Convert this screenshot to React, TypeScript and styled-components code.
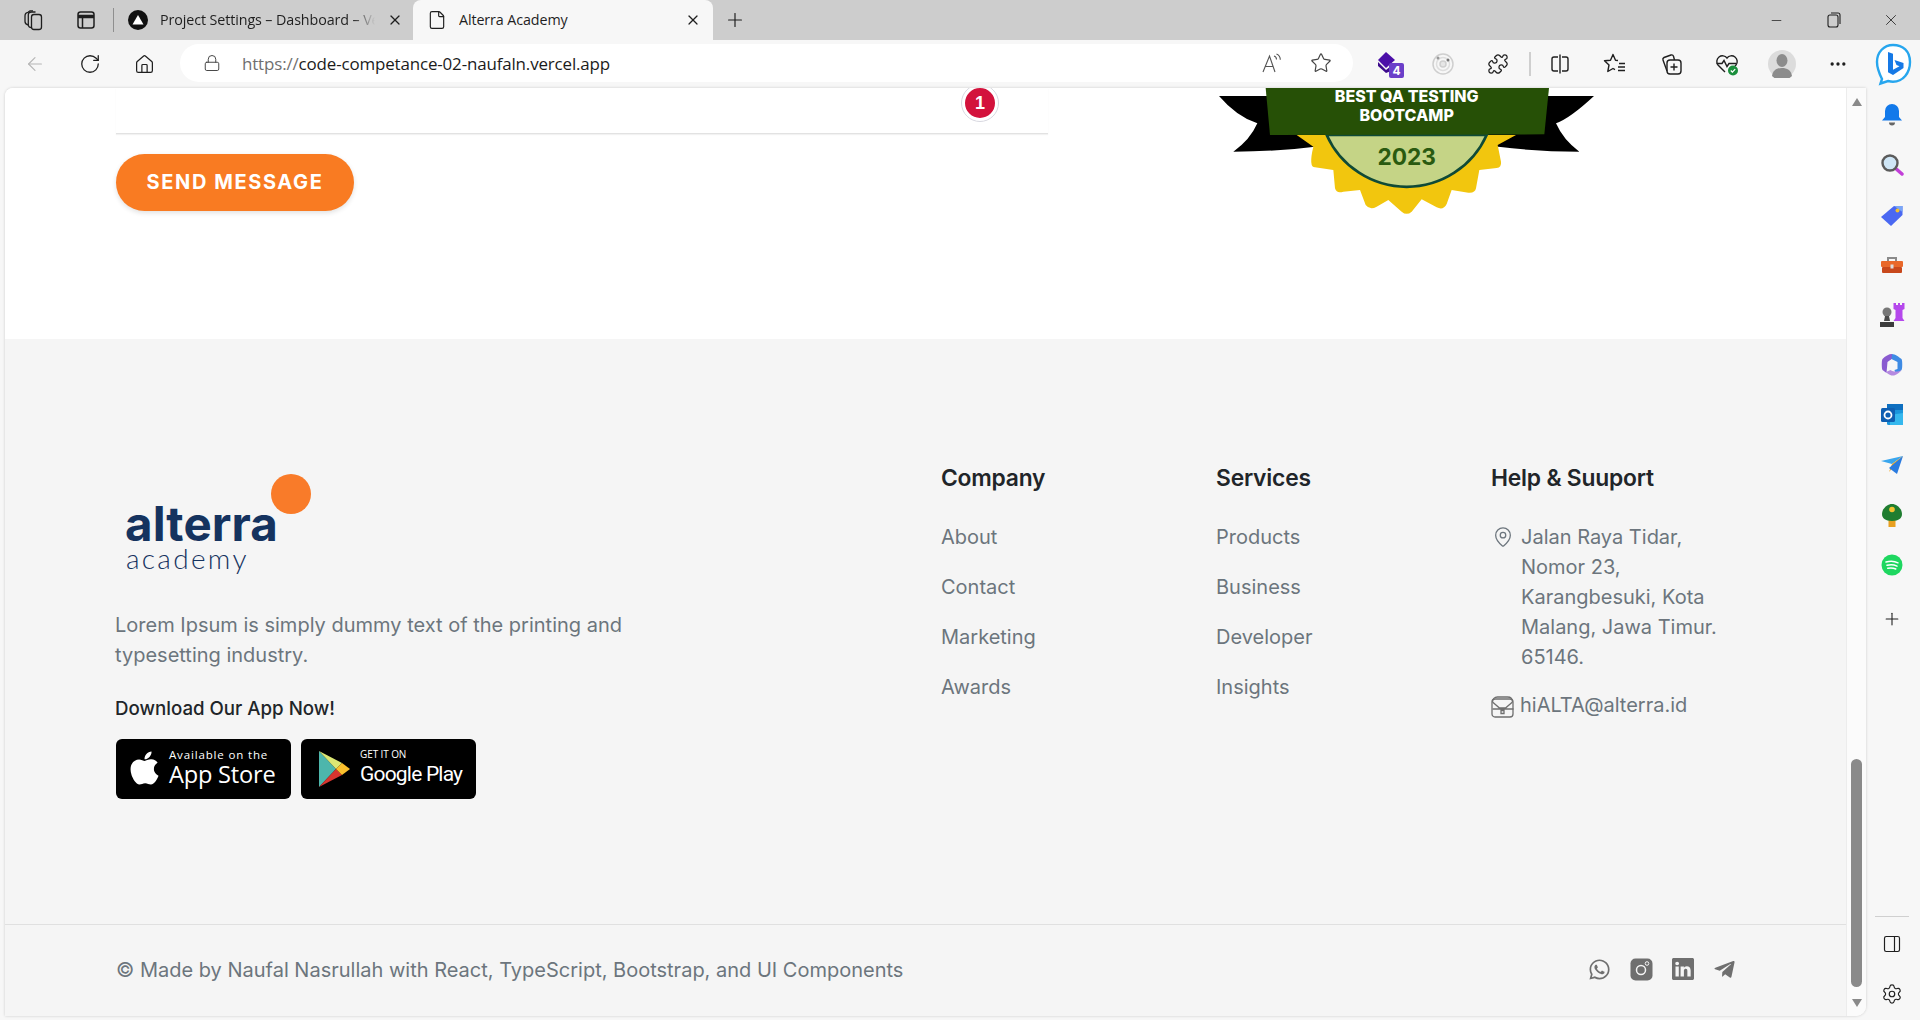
import React from "react";
import styled, { createGlobalStyle } from "styled-components";
import { FaApple, FaWhatsapp, FaTelegramPlane } from "react-icons/fa";
import { BsLinkedin } from "react-icons/bs";
import { RotateCw, Home, Lock, Star, Puzzle, ArrowLeft, X, Plus, Minus, File, MapPin, Settings, PanelRight, MoreHorizontal } from "lucide-react";

const Global = createGlobalStyle`
  html, body { margin: 0; padding: 0; background: #f7f7f7; }
  * { box-sizing: border-box; }
  #root { width: 1920px; height: 1020px; overflow: hidden; }
`;
const ink = "#1f1f1f";
const Root = styled.div`
  width: 1920px; height: 1020px; display: flex; flex-direction: column; background: #f7f7f7;
  font-family: Inter, "Liberation Sans", sans-serif; overflow: hidden;
`;
const TabStrip = styled.div`
  height: 40px; background: #cdcdcd; display: flex; align-items: stretch; padding-left: 6px; flex: none;
`;
const StripSlot = styled.div`
  width: 53px; display: flex; align-items: center; justify-content: center; color: ${ink};
`;
const StripSep = styled.div`
  width: 1px; height: 24px; background: #8f8f8f; align-self: center; margin: 0 2px 0 1px;
`;
const Tab = styled.div<{ $active?: boolean }>`
  width: ${(p) => (p.$active ? 300 : 296)}px; margin-left: ${(p) => (p.$active ? 1 : 0)}px;
  display: flex; align-items: center; gap: 12px; padding: 0 ${(p) => (p.$active ? 12 : 9)}px 0 ${(p) => (p.$active ? 14 : 12)}px;
  background: ${(p) => (p.$active ? "#f7f7f7" : "transparent")};
  border-radius: 8px 8px 0 0; color: ${ink};
`;
const TabTitle = styled.div<{ $fade?: boolean }>`
  flex: 1; overflow: hidden; white-space: nowrap; font: 400 14.3px/20px "Open Sans", sans-serif; letter-spacing: -0.1px; margin-top: -1px;
  ${(p) => p.$fade && "-webkit-mask-image: linear-gradient(90deg, #000 90%, transparent 100%); mask-image: linear-gradient(90deg, #000 90%, transparent 100%);"}
`;
const NewTab = styled.div`
  width: 44px; display: flex; align-items: center; justify-content: center; color: ${ink};
`;
const WindowControls = styled.div`
  margin-left: auto; display: flex; margin-right: 1px;
`;
const WinBtn = styled.div`
  width: 57px; display: flex; align-items: center; justify-content: center; color: ${ink};
`;
const Toolbar = styled.div`
  height: 48px; display: flex; align-items: center; padding-left: 7px; flex: none; background: #f7f7f7;
`;
const ToolSlot = styled.div<{ $muted?: boolean; $w?: number }>`
  width: ${(p) => p.$w || 55}px; height: 40px; flex: none; display: flex; align-items: center; justify-content: center;
  color: ${(p) => (p.$muted ? "#b5b5b5" : ink)}; position: relative;
`;
const AddressBar = styled.div`
  flex: 1; height: 38px; margin: -2px 10.5px 0 8px; background: #fff; border-radius: 19px;
  display: flex; align-items: center; padding: 0 7.5px 0 23px; color: #444;
`;
const UrlText = styled.div`
  margin-left: 21px; font: 400 16.95px "Open Sans", sans-serif; color: #1b1b1b; flex: 1; letter-spacing: -0.15px;
  span { color: #6f6f6f; }
`;
const BarIcon = styled.div`
  width: 49px; display: flex; justify-content: center; color: #555;
`;
const ToolSep = styled.div`
  width: 2px; height: 24px; background: #cfcfcf; margin: 0 1px 0 3px; flex: none;
`;
const Body = styled.div`
  flex: 1; display: flex; min-height: 0;
`;
const PageCard = styled.div`
  width: 1861px; margin: 0 0 4px 5px; display: flex; background: #fff; border-radius: 8px 0 10px 0;
  overflow: hidden; box-shadow: 0 0 3px rgba(0,0,0,.18); flex: none;
`;
const Content = styled.div`
  width: 1841px; display: flex; flex-direction: column;
`;
const ScrollTrack = styled.div`
  flex: 1; display: flex; flex-direction: column; align-items: center; background: #fbfbfb; padding: 10px 0 9px;
  border-left: 1px solid #ececec;
`;
const Arrow = styled.div<{ $down?: boolean }>`
  width: 0; height: 0; border-left: 5px solid transparent; border-right: 5px solid transparent;
  ${(p) => (p.$down ? "border-top: 8px solid #8a8a8a;" : "border-bottom: 8px solid #8a8a8a;")}
`;
const Thumb = styled.div`
  width: 11px; height: 228px; background: #8a8a8a; border-radius: 6px; margin: auto 0 12px;
`;
const TopSection = styled.section`
  height: 251px; display: flex; gap: 152px; padding-left: 110px; background: #fff; flex: none;
`;
const FormCol = styled.div`
  width: 933px; display: flex; flex-direction: column; align-items: flex-start;
`;
const Field = styled.div`
  width: 932px; margin-left: 1px; height: 46px; border-bottom: 1px solid #e2e2e2; box-shadow: 0 1px 1px rgba(0,0,0,.05); position: relative; flex: none;
`;
const Notice = styled.div`
  position: absolute; left: 846px; top: -3px; width: 36px; height: 36px; border-radius: 50%;
  background: #d3123c; border: 3px solid #fff; outline: 1.5px solid #d8d8e0;
  color: #fff; font: 700 18px/30px "Liberation Sans", sans-serif; text-align: center;
`;
const SendButton = styled.button`
  margin: 20px 0 0 1px; width: 238px; height: 57px; border: 0; border-radius: 29px; background: #f97b22;
  color: #fff; font: 700 20px Inter, sans-serif; letter-spacing: 1.6px; box-shadow: 0 2px 5px rgba(0,0,0,.12); padding: 0 0 2px;
`;
const BadgeArt = styled.svg`
  width: 420px; height: 160px; display: block; flex: none;
`;
const Footer = styled.footer`
  flex: 1; background: #f5f5f5; display: flex; flex-direction: column;
`;
const FooterMain = styled.div`
  height: 586px; display: flex; padding: 125px 0 0 110px; border-bottom: 1px solid #e0e0e0; flex: none;
`;
const Brand = styled.div`
  width: 826px; flex: none;
`;
const Logo = styled.div`
  position: relative; height: 146px; padding: 38px 0 0 10px; color: #15335f;
`;
const LogoMark = styled.div`
  font: 700 47.5px/44px Inter, sans-serif; letter-spacing: 0.1px; height: 44px;
`;
const LogoSub = styled.div`
  font: 300 28px/24px Lato, sans-serif; letter-spacing: 2.3px; margin-left: 1px;
`;
const LogoDot = styled.div`
  position: absolute; left: 156px; top: 10px; width: 40px; height: 40px; border-radius: 50%; background: #f97b29;
`;
const Blurb = styled.p`
  margin: 0; width: 540px; font-size: 20px; line-height: 30px; color: #6c757d;
`;
const DownloadLabel = styled.div`
  margin-top: 24px; font-size: 18.7px; line-height: 30px; font-weight: 500; color: #212529;
`;
const StoreRow = styled.div`
  display: flex; gap: 10px; margin: 15px 0 0 1px;
`;
const StoreBadge = styled.div`
  width: 175px; height: 60px; background: #000; border-radius: 6px; color: #fff; display: flex; align-items: center;
`;
const StoreText = styled.div`
  display: flex; flex-direction: column; font-family: "Open Sans", sans-serif; margin-top: -2px;
`;
const StoreSmall = styled.span<{ $tight?: boolean }>`
  font-size: ${(p) => (p.$tight ? 10 : 11.5)}px; line-height: 13px; font-weight: 500; letter-spacing: ${(p) => (p.$tight ? -0.1 : 0.85)}px;
`;
const StoreBig = styled.span<{ $thin?: boolean }>`
  font-size: ${(p) => (p.$thin ? 21 : 23.6)}px; line-height: 27px; letter-spacing: ${(p) => (p.$thin ? -0.8 : -0.2)}px; font-weight: ${(p) => (p.$thin ? 400 : 500)};
  font-family: ${(p) => (p.$thin ? "Roboto" : "Open Sans")}, sans-serif;
`;
const Column = styled.div`
  width: 275px; flex: none;
`;
const ColTitle = styled.h3`
  margin: 0 0 31px; font-size: 22.8px; line-height: 27px; font-weight: 600; color: #212529; letter-spacing: -0.2px;
`;
const LinkList = styled.div`
  display: flex; flex-direction: column; gap: 20px;
`;
const FooterLink = styled.div`
  font-size: 20px; line-height: 30px; color: #6c757d;
`;
const ContactRow = styled.div<{ $top?: number }>`
  display: flex; gap: 8px; margin-top: ${(p) => p.$top || 0}px; color: #6c757d; font-size: 20px; line-height: 30px;
  width: 240px; padding-right: 10px;
  svg { flex: none; }
`;
const MailIconWrap = styled.div`
  display: flex; align-items: center; height: 30px; margin-top: 2px;
`;
const EmailText = styled.span`
  margin-left: -2px;
`;
const BottomBar = styled.div`
  flex: 1; display: flex; align-items: center; justify-content: space-between; padding: 0 110px 2px 111px;
  color: #6c757d; font-size: 20px;
`;
const Socials = styled.div`
  display: flex; gap: 19px; color: #6f6f6f; align-items: center; margin-top: -1px;
`;
const Sidebar = styled.aside`
  width: 54px; flex: none; margin-left: auto; display: flex; flex-direction: column; align-items: center; padding: 2px 2px 1px 0;
`;
const SideItem = styled.div<{ $gap?: number }>`
  height: 50px; width: 100%; display: flex; align-items: center; justify-content: center; flex: none; color: ${ink};
  margin-top: ${(p) => p.$gap || 0}px;
`;
const SideBottom = styled.div`
  margin-top: auto; width: 100%; display: flex; flex-direction: column; align-items: center;
`;
const SideRule = styled.div`
  width: 34px; height: 1px; background: #d0d0d0; margin-bottom: 2px;
`;

const CollectionsIcon = () => (
  <svg width="22" height="22" viewBox="0 0 22 22" fill="none" stroke="currentColor" strokeWidth="1.3">
    <rect x="9.500" y="5.500" width="10" height="15" rx="2.500" />
    <path d="M9.500 18.500C7 18.500 6.300 17 6.300 15.500V6C6.300 4 7.500 3 9.500 3H13.500" />
    <path d="M6.300 16C4 15.500 3 14 3 12.500V7C3 5 4 3.500 6 3.300L8 1.800H11" />
  </svg>
);
const VerticalTabsIcon = () => (
  <svg width="20" height="20" viewBox="0 0 20 20" fill="none" stroke="currentColor" strokeWidth="1.5">
    <rect x="2" y="2" width="16" height="16" rx="2.500" />
    <path d="M2 6.500h16" strokeWidth="3.500" />
    <path d="M6.500 6.500V18" />
  </svg>
);
const VercelFav = () => (
  <svg width="20" height="20" viewBox="0 0 20 20"><circle cx="10" cy="10" r="10" fill="#111" /><path d="M10 5l5.500 9.500h-11z" fill="#fff" /></svg>
);
const ReadAloud = () => (
  <svg width="22" height="22" viewBox="0 0 22 22" fill="none" stroke="currentColor" strokeWidth="1.1">
    <path d="M2 20 8.500 4 14 20M4.500 14.500h8" />
    <path d="M13 4c1.500.5 2.500 2 2.500 3.500M15.500 2c2.500 1 3.800 3.200 3.800 5.800" />
  </svg>
);
const HexExt = () => (
  <svg width="30" height="30" viewBox="0 0 30 30">
    <path d="M11 3l9 8-9 8-8-8z" fill="#4b0fa8" />
    <path d="M3 13l8 8 5-4v5l-5 2-8-7z" fill="#3c0b8c" />
    <rect x="14" y="14" width="15" height="15" rx="2" fill="#6b3fc9" />
    <text x="21.500" y="26" textAnchor="middle" fontSize="12" fontWeight="700" fill="#fff" fontFamily="Inter">4</text>
  </svg>
);
const OrbitExt = () => (
  <svg width="24" height="24" viewBox="0 0 24 24" fill="none" stroke="#cfcfcf" strokeWidth="1.500">
    <circle cx="12" cy="12" r="10" /><circle cx="12" cy="12" r="6.500" stroke="#dedede" /><circle cx="12" cy="12" r="3" fill="#e6e6e6" />
    <circle cx="7" cy="6" r="1.500" fill="#999" stroke="none" /><circle cx="17" cy="8" r="1.500" fill="#777" stroke="none" />
  </svg>
);
const SplitIcon = () => (
  <svg width="22" height="22" viewBox="0 0 22 22" fill="none" stroke="currentColor" strokeWidth="1.400">
    <path d="M9 4H5a2 2 0 0 0-2 2v10a2 2 0 0 0 2 2h4M13 4h4a2 2 0 0 1 2 2v10a2 2 0 0 1-2 2h-4M11 1.500v19" />
  </svg>
);
const FavIcon = () => (
  <svg width="24" height="24" viewBox="0 0 24 24" fill="none" stroke="currentColor" strokeWidth="1.400" strokeLinejoin="round">
    <path d="M15 8.500 12.500 8.200 10 2.500 7.500 8.200 1.500 8.800 6 13 4.800 19.500 10 16.500 12 17.600" />
    <path d="M16 11.500h6M15 15h7M15 18.500h7" />
  </svg>
);
const AddCollIcon = () => (
  <svg width="24" height="24" viewBox="0 0 24 24" fill="none" stroke="currentColor" strokeWidth="1.400">
    <rect x="8" y="8" width="14" height="14" rx="3" />
    <path d="M15 11.500v7M11.500 15h7" />
    <path d="M8 19 4 8a2 2 0 0 1 1-2.500L12 3a2 2 0 0 1 2.500 1.200L15.500 8" />
  </svg>
);
const HealthIcon = () => (
  <svg width="26" height="26" viewBox="0 0 26 26" fill="none" stroke="currentColor" strokeWidth="1.400">
    <path d="M11 21 4 14a5.500 5.500 0 0 1 9-7 5.500 5.500 0 0 1 9 7l-1 1" />
    <path d="M2.500 12.500H8l2-3 3 6 2-3h7" />
    <circle cx="19" cy="19.500" r="5" fill="#1a8f3c" stroke="none" />
    <path d="M16.800 19.500l1.600 1.600 2.800-3" stroke="#fff" strokeWidth="1.300" />
  </svg>
);
const Avatar = () => (
  <svg width="28" height="28" viewBox="0 0 28 28">
    <circle cx="14" cy="14" r="14" fill="#dcdcdc" />
    <ellipse cx="14" cy="10.500" rx="5.500" ry="6.500" fill="#8c8c8c" />
    <path d="M4 26c1-6 5-8 10-8s9 2 10 8a14 14 0 0 1-20 0z" fill="#8c8c8c" />
  </svg>
);
const BingIcon = () => (
  <svg width="40" height="44" viewBox="0 0 40 44" fill="none">
    <path d="M20 3C11 3 4 10 4 20c0 7 2.500 12 5 17l-1.500 4.500L15 39c2 .5 3.500.7 5 .7C30 39.700 37 31 37 20S30 3 20 3z" fill="#fff" stroke="#27a6ee" strokeWidth="2.400" />
    <path d="M15 10l5 1.800v16l6.500-3.500-3-1.400-2-5 9 3.200v4.800L20 33l-5-2.800z" fill="#1679e6" />
  </svg>
);
const Bell = () => (
  <svg width="24" height="26" viewBox="0 0 24 26"><path d="M12 2a7 7 0 0 1 7 7v6l3 3.500H2L5 15V9a7 7 0 0 1 7-7z" fill="#1279ea" /><path d="M9 20.500h6a3 3 0 0 1-6 0z" fill="#666" /></svg>
);
const Search = () => (
  <svg width="24" height="24" viewBox="0 0 24 24"><path d="M14 14l8 7" stroke="#c23fd8" strokeWidth="3.500" strokeLinecap="round" /><circle cx="10" cy="10" r="7.500" fill="#cfe6f6" stroke="#5b5b5b" strokeWidth="2.400" /></svg>
);
const TagIcon = () => (
  <svg width="24" height="24" viewBox="0 0 24 24"><path d="M1 14 14 3h8.500v9L11 23z" fill="#4a68f2" /><path d="M14 3h8.500v6z" fill="#7aa6f6" /><circle cx="17.500" cy="7.500" r="2" fill="#f0c030" /></svg>
);
const Toolbox = () => (
  <svg width="24" height="24" viewBox="0 0 24 24"><path d="M8 8V5h8v3" fill="none" stroke="#8a8a8a" strokeWidth="2" /><rect x="1" y="8" width="22" height="6" fill="#e9682a" rx="1" /><rect x="2" y="14" width="20" height="6" fill="#c8481c" rx="1" /><rect x="10.500" y="11.500" width="3" height="4" fill="#ddd" /></svg>
);
const Chess = () => (
  <svg width="26" height="26" viewBox="0 0 26 26"><path d="M14.500 1h2.500v2h2V1h2v2h2V1h2.500v6l-2 1v8l2 3H14.500l2-3V8l-2-1z" fill="#b548ec" /><circle cx="8" cy="10" r="4.500" fill="#777" /><path d="M6 14h4l1 5H5z" fill="#4a4a4a" /><path d="M1 20h14v5H1z" fill="#3c3c3c" rx="2" /></svg>
);
const M365 = () => (
  <svg width="24" height="24" viewBox="0 0 24 24"><path d="M12 1c3 0 7 3 9.500 5 1 1 1 10 0 11-1 1-4 3-6 4l-1-4 3-1V9l-6-3-4 2-1-4z" fill="#3e8be4" /><path d="M12 1C9 1 5 3 2.500 6c-1 1-1 10 0 11l4 3 1-11 4-3z" fill="#8a5bd0" /><path d="M6 19c3 3 6 4 8 3.500 2-.5 6-3 7.500-5.500-3 2-8 2-11 0z" fill="#b58ae0" /><circle cx="12" cy="12" r="4" fill="#f7f7f7" /></svg>
);
const Outlook = () => (
  <svg width="24" height="24" viewBox="0 0 24 24"><rect x="7" y="1" width="16" height="21" rx="1.500" fill="#1a96dc" /><path d="M7 1h16v6H7z" fill="#0e6fc0" /><path d="M10 12l13-2v12H10z" fill="#35b8ee" /><rect x="1" y="5" width="14" height="14" rx="1.500" fill="#0f5fb2" /><circle cx="8" cy="12" r="3.500" fill="none" stroke="#fff" strokeWidth="1.800" /></svg>
);
const Plane = () => (
  <svg width="24" height="20" viewBox="0 0 24 20"><path d="M1 6 23 1 12 9z" fill="#3aa6ee" /><path d="M23 1 12 9l-3 8z" fill="#f2a51c" /><path d="M23 1l-6 18-8-6z" fill="#2a7be0" /></svg>
);
const Tree = () => (
  <svg width="22" height="24" viewBox="0 0 22 24"><rect x="7.500" y="15" width="7" height="9" fill="#e8a020" /><path d="M11 1c5 0 10 5 10 10 0 4-3 7-10 7S1 15 1 11C1 6 6 1 11 1z" fill="#1f7d30" /><circle cx="11" cy="6.500" r="2.800" fill="#f2c430" /></svg>
);
const Spotify = () => (
  <svg width="22" height="22" viewBox="0 0 22 22" fill="none"><circle cx="11" cy="11" r="10.500" fill="#1ed760" /><path d="M5 8c4-1.200 8.500-1 12 .8M6 11.300c3.500-1 7-.7 10 .8M6.800 14.300c2.800-.7 5.500-.5 8 .7" stroke="#fff" strokeWidth="1.500" strokeLinecap="round" /></svg>
);
const InstaIcon = () => (
  <svg width="23" height="23" viewBox="0 0 23 23">
    <rect x="0.500" y="0.500" width="22" height="22" rx="5" fill="#6f6f6f" />
    <circle cx="11" cy="12" r="4.500" fill="none" stroke="#f5f5f5" strokeWidth="1.500" />
    <circle cx="17" cy="5.500" r="1.800" fill="none" stroke="#f5f5f5" strokeWidth="1" />
  </svg>
);
const MailBoxIcon = () => (
  <svg width="23" height="22" viewBox="0 0 23 22" fill="none" stroke="#6f6f6f" strokeWidth="1.300">
    <rect x="1" y="3" width="21" height="18" rx="3" />
    <path d="M1.500 6c0-3 2-5 5-5h10c3 0 5 2 5 5M1.500 6l7 6h6l7-6M1.500 13h21M10 14.500h3v3h-3z" />
  </svg>
);
const AppleMark = styled(FaApple)`
  width: 31px; height: 38px; margin: -3px 9px 0 13px; flex: none;
`;
const PlayMarkSvg = styled.svg`
  margin: 0 10px 0 17px; flex: none;
`;
const PlayMark = () => (
  <PlayMarkSvg width="32" height="38" viewBox="0 0 32 38">
    <path d="M1 1v36l17-18z" fill="#4db6ac" />
    <path d="M1 1l17 18 6-6z" fill="#dce774" />
    <path d="M1 37l17-18 6 6z" fill="#d7352f" />
    <path d="M24 13l8 6-8 6-6-6z" fill="#fbc02d" />
  </PlayMarkSvg>
);

const AwardBadge = () => (
  <BadgeArt viewBox="0 24 1260 480">
    <path d="M57 48H1182Q1110 115 1068 130Q1090 180 1138 215Q1010 215 895 200H345Q230 215 100 215Q150 180 172 130Q110 110 57 48z" fill="#000" />
    <path d="M290 165L340 200Q325 262 345 262L400 270L405 325Q410 342 430 335L480 330L497 375Q510 392 530 380L565 360L605 395Q620 408 635 395L665 358L710 382Q730 392 740 372L755 330L805 338Q825 340 828 325L838 270L890 264Q905 262 903 245L893 195L948 165z" fill="#f2c60e" />
    <path d="M380 165A263 263 0 0 0 860 165z" fill="#c5d486" stroke="#0f4a37" strokeWidth="8" />
    <path d="M197 24H1047L1033 163L210 165z" fill="#265006" />
    <text x="620" y="67" textAnchor="middle" fill="#fff" fontFamily="Inter" fontWeight="800" fontSize="48">BEST QA TESTING</text>
    <text x="620" y="123" textAnchor="middle" fill="#fff" fontFamily="Inter" fontWeight="800" fontSize="48">BOOTCAMP</text>
    <text x="620" y="255" textAnchor="middle" fill="#2a5a10" fontFamily="Inter" fontWeight="700" fontSize="68">2023</text>
  </BadgeArt>
);

export default function App() {
  return (
    <Root>
      <Global />
      <TabStrip>
        <StripSlot><CollectionsIcon /></StripSlot>
        <StripSlot><VerticalTabsIcon /></StripSlot>
        <StripSep />
        <Tab>
          <VercelFav />
          <TabTitle $fade>Project Settings – Dashboard – Vercel</TabTitle>
          <X size={16} strokeWidth={1.8} />
        </Tab>
        <Tab $active>
          <File size={20} strokeWidth={1.4} />
          <TabTitle>Alterra Academy</TabTitle>
          <X size={16} strokeWidth={1.8} />
        </Tab>
        <NewTab><Plus size={22} strokeWidth={1.3} /></NewTab>
        <WindowControls>
          <WinBtn><Minus size={15} strokeWidth={1.2} /></WinBtn>
          <WinBtn><svg width="14" height="16" viewBox="0 0 14 16" fill="none" stroke="currentColor" strokeWidth="1.100"><rect x="1" y="3" width="10" height="12" rx="2" /><path d="M4 1h7a2 2 0 0 1 2 2v9" /></svg></WinBtn>
          <WinBtn><X size={18} strokeWidth={1.1} /></WinBtn>
        </WindowControls>
      </TabStrip>
      <Toolbar>
        <ToolSlot $muted><ArrowLeft size={22} strokeWidth={1.2} /></ToolSlot>
        <ToolSlot><RotateCw size={22} strokeWidth={1.4} /></ToolSlot>
        <ToolSlot><Home size={21} strokeWidth={1.4} /></ToolSlot>
        <AddressBar>
          <Lock size={18} strokeWidth={1.3} />
          <UrlText><span>https://</span>code-competance-02-naufaln.vercel.app</UrlText>
          <BarIcon><ReadAloud /></BarIcon>
          <BarIcon><Star size={22} strokeWidth={1.3} color="#444" /></BarIcon>
        </AddressBar>
        <ToolSlot $w={53}><HexExt /></ToolSlot>
        <ToolSlot $w={53}><OrbitExt /></ToolSlot>
        <ToolSlot $w={56}><Puzzle size={22} strokeWidth={1.4} /></ToolSlot>
        <ToolSep />
        <ToolSlot $w={55.7}><SplitIcon /></ToolSlot>
        <ToolSlot $w={55.7}><FavIcon /></ToolSlot>
        <ToolSlot $w={55.7}><AddCollIcon /></ToolSlot>
        <ToolSlot $w={55.7}><HealthIcon /></ToolSlot>
        <ToolSlot $w={55.7}><Avatar /></ToolSlot>
        <ToolSlot $w={55.7}><MoreHorizontal size={20} strokeWidth={2} /></ToolSlot>
        <ToolSlot $w={54}><BingIcon /></ToolSlot>
      </Toolbar>
      <Body>
        <PageCard>
          <Content>
            <TopSection>
              <FormCol>
                <Field><Notice>1</Notice></Field>
                <SendButton>SEND MESSAGE</SendButton>
              </FormCol>
              <AwardBadge />
            </TopSection>
            <Footer>
              <FooterMain>
                <Brand>
                  <Logo>
                    <LogoMark>alterra</LogoMark>
                    <LogoSub>academy</LogoSub>
                    <LogoDot />
                  </Logo>
                  <Blurb>Lorem Ipsum is simply dummy text of the printing and typesetting industry.</Blurb>
                  <DownloadLabel>Download Our App Now!</DownloadLabel>
                  <StoreRow>
                    <StoreBadge>
                      <AppleMark />
                      <StoreText>
                        <StoreSmall>Available on the</StoreSmall>
                        <StoreBig>App Store</StoreBig>
                      </StoreText>
                    </StoreBadge>
                    <StoreBadge>
                      <PlayMark />
                      <StoreText>
                        <StoreSmall $tight>GET IT ON</StoreSmall>
                        <StoreBig $thin>Google Play</StoreBig>
                      </StoreText>
                    </StoreBadge>
                  </StoreRow>
                </Brand>
                <Column>
                  <ColTitle>Company</ColTitle>
                  <LinkList>
                    <FooterLink>About</FooterLink>
                    <FooterLink>Contact</FooterLink>
                    <FooterLink>Marketing</FooterLink>
                    <FooterLink>Awards</FooterLink>
                  </LinkList>
                </Column>
                <Column>
                  <ColTitle>Services</ColTitle>
                  <LinkList>
                    <FooterLink>Products</FooterLink>
                    <FooterLink>Business</FooterLink>
                    <FooterLink>Developer</FooterLink>
                    <FooterLink>Insights</FooterLink>
                  </LinkList>
                </Column>
                <Column>
                  <ColTitle>Help &amp; Suuport</ColTitle>
                  <ContactRow>
                    <MapPin size={22} strokeWidth={1.4} style={{ marginTop: 4, marginLeft: 1, marginRight: -1 }} />
                    <span>Jalan Raya Tidar, Nomor 23, Karangbesuki, Kota Malang, Jawa Timur. 65146.</span>
                  </ContactRow>
                  <ContactRow $top={18}>
                    <MailIconWrap><MailBoxIcon /></MailIconWrap>
                    <EmailText>hiALTA@alterra.id</EmailText>
                  </ContactRow>
                </Column>
              </FooterMain>
              <BottomBar>
                <span>© Made by Naufal Nasrullah with React, TypeScript, Bootstrap, and UI Components</span>
                <Socials>
                  <FaWhatsapp size={23} />
                  <InstaIcon />
                  <BsLinkedin size={22} />
                  <FaTelegramPlane size={23} />
                </Socials>
              </BottomBar>
            </Footer>
          </Content>
          <ScrollTrack>
            <Arrow />
            <Thumb />
            <Arrow $down />
          </ScrollTrack>
        </PageCard>
        <Sidebar>
          <SideItem><Bell /></SideItem>
          <SideItem><Search /></SideItem>
          <SideItem><TagIcon /></SideItem>
          <SideItem><Toolbox /></SideItem>
          <SideItem><Chess /></SideItem>
          <SideItem><M365 /></SideItem>
          <SideItem><Outlook /></SideItem>
          <SideItem><Plane /></SideItem>
          <SideItem><Tree /></SideItem>
          <SideItem><Spotify /></SideItem>
          <SideItem $gap={4}><Plus size={20} strokeWidth={1.3} /></SideItem>
          <SideBottom>
            <SideRule />
            <SideItem><PanelRight size={20} strokeWidth={1.4} /></SideItem>
            <SideItem><Settings size={22} strokeWidth={1.3} /></SideItem>
          </SideBottom>
        </Sidebar>
      </Body>
    </Root>
  );
}
